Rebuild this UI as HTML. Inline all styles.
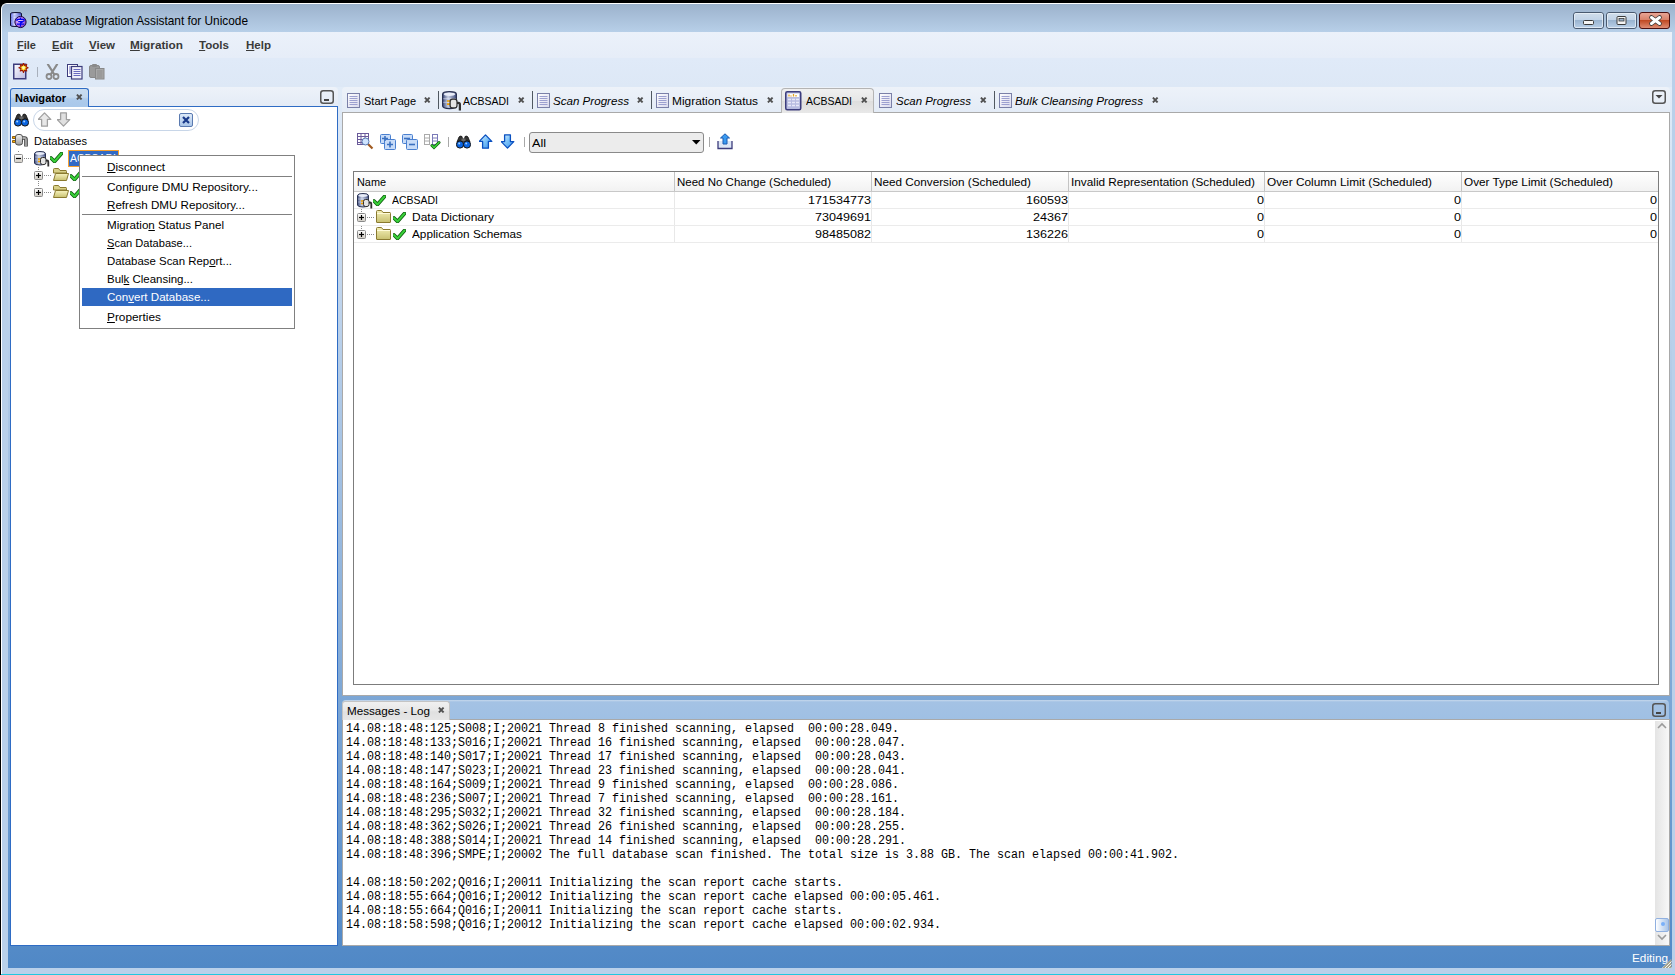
<!DOCTYPE html>
<html><head><meta charset="utf-8"><style>
*{margin:0;padding:0;box-sizing:border-box}
html,body{width:1675px;height:975px;overflow:hidden;background:#000;font-family:"Liberation Sans",sans-serif;font-size:11.5px;color:#000}
.a{position:absolute}
.t{position:absolute;white-space:nowrap;line-height:1}
u{text-decoration:underline;text-underline-offset:1px}
</style></head><body>
<div class="a" style="left:1px;top:3px;width:1674px;height:972px;background:#b9d0ea;border-top:1px solid #fff;border-left:1px solid #fff;border-radius:6px 0 0 0"></div>
<div class="a" style="left:2px;top:4px;width:1673px;height:28px;background:linear-gradient(#9cb2cc,#b7cfe8);border-radius:5px 0 0 0"></div>
<div class="a" style="left:8px;top:32px;width:1664px;height:936px;background:linear-gradient(#e9f0fa 0px,#e2ecf8 55px,#5088c6 936px)"></div>
<div class="a" style="left:8px;top:32px;width:1664px;height:26px;background:linear-gradient(#ebf1fa,#e6edf8)"></div>
<div class="a" style="left:8px;top:58px;width:1664px;height:29px;background:linear-gradient(#e0eaf8,#dde8f6)"></div>
<div class="a" style="left:1px;top:974px;width:1674px;height:1px;background:#1fc8e0"></div>
<svg class="a" style="left:10px;top:12px;" width="17" height="17" viewBox="0 0 17 17"><defs><linearGradient id="aig" x1="0" x2="1"><stop offset="0" stop-color="#4a58d8"/><stop offset=".35" stop-color="#d8dcff"/><stop offset="1" stop-color="#3a48c8"/></linearGradient>
<radialGradient id="aic" cx=".4" cy=".4" r=".7"><stop offset="0" stop-color="#f0d0ff"/><stop offset=".6" stop-color="#b070e8"/><stop offset="1" stop-color="#6020a0"/></radialGradient></defs>
<path d="M0.5 1.5 Q0.5 0.5 6 0.5 Q11.5 0.5 11.5 1.5 L11.5 13.5 Q11.5 14.5 6 14.5 Q0.5 14.5 0.5 13.5Z" fill="url(#aig)" stroke="#101030" stroke-width="1"/>
<path d="M1 4h10M1 7h10M1 10h10" stroke="#a0a8f0" stroke-width=".8"/>
<circle cx="10.5" cy="10" r="5.6" fill="url(#aic)" stroke="#1a0840" stroke-width="1"/>
<path d="M10.5 5.6v1.2 M7 9v-1.6h7v1.6 M8.2 9.6h4.6l-2.3 1.6v3.6 M6.8 12.2h7.4" fill="none" stroke="#0000f0" stroke-width="1.3"/></svg>
<div class="t" style="left:31.00px;top:14px;font-size:13px;font-weight:normal;font-style:normal;color:#000;font-family:'Liberation Sans',sans-serif;transform:scaleX(0.9099);transform-origin:0 0;">Database Migration Assistant for Unicode</div>
<svg class="a" style="left:1573px;top:12px;" width="98" height="18" viewBox="0 0 98 18"><defs>
<linearGradient id="wbg" x1="0" y1="0" x2="0" y2="1"><stop offset="0" stop-color="#d2deec"/><stop offset=".45" stop-color="#c2d4e8"/><stop offset=".5" stop-color="#9ab4d0"/><stop offset="1" stop-color="#bcd2ea"/></linearGradient>
<linearGradient id="wcg" x1="0" y1="0" x2="0" y2="1"><stop offset="0" stop-color="#eaa898"/><stop offset=".45" stop-color="#d8826a"/><stop offset=".5" stop-color="#c04a24"/><stop offset="1" stop-color="#e09078"/></linearGradient>
</defs>
<rect x="0.5" y="0.5" width="30" height="16" rx="2.5" fill="url(#wbg)" stroke="#4a5a70"/>
<rect x="1.5" y="1.5" width="28" height="14" rx="1.5" fill="none" stroke="#eef4fa" stroke-opacity=".7"/>
<rect x="10.5" y="8.5" width="10" height="4" rx="1" fill="#f4f4f4" stroke="#3a3a3a"/>
<rect x="33.5" y="0.5" width="30" height="16" rx="2.5" fill="url(#wbg)" stroke="#4a5a70"/>
<rect x="34.5" y="1.5" width="28" height="14" rx="1.5" fill="none" stroke="#eef4fa" stroke-opacity=".7"/>
<rect x="44" y="4.5" width="9" height="8" rx="1" fill="#f4f4f4" stroke="#3a3a3a"/>
<rect x="46" y="6.5" width="5" height="2.5" fill="#98b2ce" stroke="#3a3a3a" stroke-width=".8"/>
<rect x="66.5" y="0.5" width="30" height="16" rx="2.5" fill="url(#wcg)" stroke="#4a1010"/>
<path d="M78.5 5.5 L86.5 11.5 M86.5 5.5 L78.5 11.5" stroke="#3a3a3a" stroke-width="4.6" stroke-linecap="round"/>
<path d="M78.5 5.5 L86.5 11.5 M86.5 5.5 L78.5 11.5" stroke="#fff" stroke-width="3" stroke-linecap="round"/></svg>
<div class="t" style="left:17.00px;top:40px;font-size:11.5px;font-weight:bold;font-style:normal;color:#3a3a3a;font-family:'Liberation Sans',sans-serif;transform:scaleX(0.9578);transform-origin:0 0;"><u>F</u>ile</div>
<div class="t" style="left:52.00px;top:40px;font-size:11.5px;font-weight:bold;font-style:normal;color:#3a3a3a;font-family:'Liberation Sans',sans-serif;transform:scaleX(0.9662);transform-origin:0 0;"><u>E</u>dit</div>
<div class="t" style="left:89.00px;top:40px;font-size:11.5px;font-weight:bold;font-style:normal;color:#3a3a3a;font-family:'Liberation Sans',sans-serif;"><u>V</u>iew</div>
<div class="t" style="left:130.00px;top:40px;font-size:11.5px;font-weight:bold;font-style:normal;color:#3a3a3a;font-family:'Liberation Sans',sans-serif;transform:scaleX(1.0242);transform-origin:0 0;"><u>M</u>igration</div>
<div class="t" style="left:199.00px;top:40px;font-size:11.5px;font-weight:bold;font-style:normal;color:#3a3a3a;font-family:'Liberation Sans',sans-serif;transform:scaleX(1.0072);transform-origin:0 0;"><u>T</u>ools</div>
<div class="t" style="left:246.00px;top:40px;font-size:11.5px;font-weight:bold;font-style:normal;color:#3a3a3a;font-family:'Liberation Sans',sans-serif;transform:scaleX(1.0041);transform-origin:0 0;"><u>H</u>elp</div>
<svg class="a" style="left:13px;top:63px;" width="17" height="17" viewBox="0 0 17 17"><defs><linearGradient id="ng" x1="0" y1="0" x2="1" y2="1"><stop offset="0" stop-color="#fff"/><stop offset="1" stop-color="#b8b8e0"/></linearGradient></defs>
<rect x="0.75" y="1.25" width="12" height="14.5" fill="url(#ng)" stroke="#3c3c7c" stroke-width="1.5"/>
<polygon points="10.50,0.20 11.49,2.40 13.75,1.55 12.90,3.81 15.10,4.80 12.90,5.79 13.75,8.05 11.49,7.20 10.50,9.40 9.51,7.20 7.25,8.05 8.10,5.79 5.90,4.80 8.10,3.81 7.25,1.55 9.51,2.40" fill="#ffe830" stroke="#a01800" stroke-width="1.1" stroke-linejoin="round"/><circle cx="10.5" cy="4.8" r="1.3" fill="#fff8c0"/></svg><div class="a" style="left:37px;top:67px;width:1px;height:10px;background:#a8b0bc"></div><svg class="a" style="left:45px;top:64px;" width="15" height="16" viewBox="0 0 15 16"><path d="M3 0.5 L9 10 M12 0.5 L6 10" stroke="#8a8a8a" stroke-width="2.2" stroke-linecap="round"/>
<circle cx="4" cy="12.5" r="2.5" fill="none" stroke="#8a8a8a" stroke-width="1.8"/><circle cx="11" cy="12.5" r="2.5" fill="none" stroke="#8a8a8a" stroke-width="1.8"/></svg><svg class="a" style="left:67px;top:64px;" width="16" height="16" viewBox="0 0 16 16"><rect x="0.5" y="0.5" width="10" height="12" fill="#fff" stroke="#3c3c7c"/>
<path d="M2 3h6M2 5h6M2 7h6M2 9h6" stroke="#6a6ac0"/>
<rect x="4.5" y="2.5" width="10.5" height="12.5" fill="#f0f0fa" stroke="#3c3c7c" stroke-width="1.2"/>
<path d="M6.5 5.5h7M6.5 7.5h7M6.5 9.5h7M6.5 11.5h7" stroke="#6a6ac0"/></svg><svg class="a" style="left:89px;top:64px;" width="16" height="16" viewBox="0 0 16 16"><rect x="0.5" y="1.5" width="10" height="12" rx="1.5" fill="#9a9a9a" stroke="#888"/>
<rect x="3" y="0" width="5" height="3" rx="1" fill="#8a8a8a"/>
<rect x="6.5" y="4.5" width="8.5" height="10.5" fill="#a8a8a8" stroke="#888"/>
<path d="M8 7h5.5M8 9h5.5M8 11h5.5M8 13h5.5" stroke="#8c8c8c"/></svg>
<div class="a" style="left:10px;top:87px;width:328px;height:20px;background:linear-gradient(#edf2f9,#e3ebf6);border-radius:4px 4px 0 0"></div>
<div class="a" style="left:10px;top:88px;width:79px;height:19px;background:linear-gradient(#c9dcf0 0,#c3d8ee 45%,#aecbeb 55%,#a9c8ea 100%);border:1px solid #2f6cc4;border-bottom:none;border-radius:3px 3px 0 0"></div>
<div class="a" style="left:10px;top:106px;width:328px;height:840px;background:#fff;border:1px solid #2f6cc4"></div>
<div class="a" style="left:11px;top:106px;width:77px;height:1px;background:#a9c8ea"></div>
<div class="t" style="left:15.00px;top:93px;font-size:11.5px;font-weight:bold;font-style:normal;color:#000;font-family:'Liberation Sans',sans-serif;transform:scaleX(0.9620);transform-origin:0 0;">Navigator</div>
<svg class="a" style="left:76px;top:94px;" width="7" height="6" viewBox="0 0 7 6"><path d="M0.9 0.6 L5.6 5.4 M5.6 0.6 L0.9 5.4" stroke="#505050" stroke-width="1.9"/></svg>
<svg class="a" style="left:320px;top:90px;" width="14" height="14" viewBox="0 0 14 14"><rect x="0.75" y="0.75" width="12.5" height="12.5" rx="2.5" fill="none" stroke="#555" stroke-width="1.5"/><rect x="4" y="9" width="5" height="2" fill="#444"/></svg>
<div class="a" style="left:342px;top:87px;width:1328px;height:26px;background:linear-gradient(#edf2f9,#e3ebf6);border-radius:4px 4px 0 0"></div>
<div class="a" style="left:342px;top:112px;width:1328px;height:584px;background:#fff;border:1px solid #a9a9a9"></div>
<svg class="a" style="left:1652px;top:90px;" width="14" height="14" viewBox="0 0 14 14"><rect x="0.75" y="0.75" width="12.5" height="12.5" rx="2.5" fill="none" stroke="#555" stroke-width="1.5"/><path d="M3.5 5 L10.5 5 L7 8.5Z" fill="#444"/></svg>
<div class="a" style="left:342px;top:700px;width:1327px;height:20px;background:linear-gradient(#c6d8ec 0,#a4c2e4 2px,#9fc0e4 100%);border-radius:4px 4px 0 0"></div>
<div class="a" style="left:342px;top:719px;width:1328px;height:227px;background:#fff;border:1px solid #a9a9a9"></div>
<div class="a" style="left:342px;top:701px;width:108px;height:19px;background:linear-gradient(#f0f0f0,#e8e8e8 45%,#e0e0e0 55%,#e6e6e6);border-radius:3px 3px 0 0;border:1px solid #c4c4c4;border-bottom:none"></div>
<div class="t" style="left:347.00px;top:706px;font-size:11.5px;font-weight:normal;font-style:normal;color:#000;font-family:'Liberation Sans',sans-serif;transform:scaleX(1.0144);transform-origin:0 0;">Messages - Log</div>
<svg class="a" style="left:438px;top:707px;" width="7" height="6" viewBox="0 0 7 6"><path d="M0.9 0.6 L5.6 5.4 M5.6 0.6 L0.9 5.4" stroke="#505050" stroke-width="1.9"/></svg>
<svg class="a" style="left:1652px;top:703px;" width="14" height="14" viewBox="0 0 14 14"><rect x="0.75" y="0.75" width="12.5" height="12.5" rx="2.5" fill="none" stroke="#555" stroke-width="1.5"/><rect x="4" y="9" width="5" height="2" fill="#444"/></svg>
<svg class="a" style="left:14px;top:113px;" width="15" height="14" viewBox="0 0 15 14"><path d="M1 7 L3 2 Q4 0.5 6 1.5 L6.5 4 L8.5 4 L9 1.5 Q11 0.5 12 2 L14 7Z" fill="#333" stroke="#111" stroke-width=".8"/>
<rect x="5.5" y="3.5" width="4" height="3" fill="#666"/>
<circle cx="4" cy="9.5" r="3.6" fill="#0a64e0" stroke="#111" stroke-width="1"/>
<circle cx="11" cy="9.5" r="3.6" fill="#0a64e0" stroke="#111" stroke-width="1"/>
<circle cx="3.2" cy="8.6" r="1" fill="#a0d0ff"/><circle cx="10.2" cy="8.6" r="1" fill="#a0d0ff"/></svg>
<div class="a" style="left:33px;top:109px;width:166px;height:22px;border:1px solid #c8d6e8;border-radius:11px;background:#fff"></div>
<svg class="a" style="left:38px;top:112px;" width="14" height="15" viewBox="0 0 14 15"><path d="M6.5 0.9 L12.8 7.4 L9.4 7.4 L9.4 14.2 L3.6 14.2 L3.6 7.4 L0.2 7.4Z" fill="#e8e8e8" stroke="#a0a0a0" stroke-width="1.3" stroke-linejoin="round"/></svg>
<svg class="a" style="left:57px;top:112px;" width="14" height="15" viewBox="0 0 14 15"><path d="M6.5 14.1 L12.8 7.6 L9.4 7.6 L9.4 0.8 L3.6 0.8 L3.6 7.6 L0.2 7.6Z" fill="#e0e0e0" stroke="#a0a0a0" stroke-width="1.3" stroke-linejoin="round"/></svg>
<svg class="a" style="left:179px;top:113px;" width="15" height="15" viewBox="0 0 15 15"><defs><linearGradient id="xg" x1="0" y1="0" x2="0" y2="1"><stop offset="0" stop-color="#e0ecfa"/><stop offset="1" stop-color="#a8c4e8"/></linearGradient></defs>
<rect x="0.5" y="0.5" width="13" height="13" rx="1.5" fill="url(#xg)" stroke="#5a7ab0"/>
<path d="M4 4 L10 10 M10 4 L4 10" stroke="#1a3a8a" stroke-width="2.2"/></svg>
<svg class="a" style="left:12px;top:134px;" width="16" height="14" viewBox="0 0 16 14"><defs><linearGradient id="plg" x1="0" y1="0" x2="0" y2="1"><stop offset="0" stop-color="#f4f4f4"/><stop offset="1" stop-color="#9a9a9a"/></linearGradient></defs>
<path d="M0.5 2.5h3.5v2h-3.5z M0.5 6.5h3.5v2h-3.5z" fill="#f8b000" stroke="#704000" stroke-width=".8"/>
<rect x="3.5" y="0.5" width="7" height="10.5" rx="2.5" fill="url(#plg)" stroke="#505050"/>
<path d="M10.5 4 h2 q1.5 0 1.5 1.5 v7" fill="none" stroke="#404040" stroke-width="3.6"/>
<path d="M10.5 4 h2 q1.5 0 1.5 1.5 v7" fill="none" stroke="#a8a8a8" stroke-width="1.8"/></svg>
<div class="t" style="left:34.00px;top:136px;font-size:11.5px;font-weight:normal;font-style:normal;color:#000;font-family:'Liberation Sans',sans-serif;transform:scaleX(0.9642);transform-origin:0 0;">Databases</div>
<svg class="a" style="left:14px;top:154px;" width="9" height="9" viewBox="0 0 9 9"><defs><linearGradient id="tbg" x1="0" y1="0" x2="0" y2="1"><stop offset="0" stop-color="#fff"/><stop offset="1" stop-color="#d0ccc4"/></linearGradient></defs><rect x="0.5" y="0.5" width="8" height="8" rx="1" fill="url(#tbg)" stroke="#8a8a8a"/><path d="M2 4.5h5" stroke="#000" stroke-width="1.2"/></svg>
<div class="a" style="left:24px;top:158px;width:7px;height:1px;background:repeating-linear-gradient(90deg,#8a8a8a 0 1px,transparent 1px 2px)"></div>
<div class="a" style="left:18px;top:151px;width:1px;height:2px;background:repeating-linear-gradient(180deg,#8a8a8a 0 1px,transparent 1px 2px)"></div>
<svg class="a" style="left:34px;top:151px;" width="16" height="16" viewBox="0 0 16 16"><defs><linearGradient id="dbg" x1="0" x2="1"><stop offset="0" stop-color="#3e4c7c"/><stop offset=".4" stop-color="#c8d0e4"/><stop offset="1" stop-color="#404e80"/></linearGradient></defs>
<path d="M0.5 2.5 Q0.5 0.5 6 0.5 Q11.5 0.5 11.5 2.5 L11.5 12 Q11.5 14 6 14 Q0.5 14 0.5 12Z" fill="url(#dbg)" stroke="#283050"/>
<ellipse cx="6" cy="2.6" rx="4.6" ry="1.3" fill="#e8ecf8"/>
<path d="M1 6h10M1 9h10" stroke="#e8ecf8" stroke-opacity=".45"/>
<path d="M4 8h3M4 10.5h3" stroke="#f0a000" stroke-width="1.3"/>
<rect x="6.5" y="6.5" width="5.5" height="7" rx="2" fill="#e4e4e4" stroke="#303030"/>
<path d="M12 9.5 h1 q1.3 0 1.3 1.3 v4.7" fill="none" stroke="#303030" stroke-width="1.8"/></svg>
<svg class="a" style="left:50px;top:152px;" width="13" height="11" viewBox="0 0 13 11"><path d="M1 6 L4.5 9.5 L11.5 1.5" fill="none" stroke="#0a5a0a" stroke-width="3.6" stroke-linecap="round" stroke-linejoin="round"/>
<path d="M1 6 L4.5 9.5 L11.5 1.5" fill="none" stroke="#3ad03a" stroke-width="2" stroke-linecap="round" stroke-linejoin="round"/></svg>
<div class="a" style="left:68px;top:150px;width:51px;height:17px;background:#316ac5;border:1px solid #f5a030"></div>
<div class="t" style="left:70.00px;top:153px;font-size:11.5px;font-weight:normal;font-style:normal;color:#fff;font-family:'Liberation Sans',sans-serif;transform:scaleX(0.9112);transform-origin:0 0;">ACBSADI</div>
<svg class="a" style="left:34px;top:171px;" width="9" height="9" viewBox="0 0 9 9"><defs><linearGradient id="tbg" x1="0" y1="0" x2="0" y2="1"><stop offset="0" stop-color="#fff"/><stop offset="1" stop-color="#d0ccc4"/></linearGradient></defs><rect x="0.5" y="0.5" width="8" height="8" rx="1" fill="url(#tbg)" stroke="#8a8a8a"/><path d="M2 4.5h5" stroke="#000" stroke-width="1.2"/><path d="M4.5 2v5" stroke="#000" stroke-width="1.2"/></svg>
<div class="a" style="left:44px;top:175px;width:7px;height:1px;background:repeating-linear-gradient(90deg,#8a8a8a 0 1px,transparent 1px 2px)"></div>
<svg class="a" style="left:53px;top:168px;" width="16" height="14" viewBox="0 0 16 14"><defs><linearGradient id="fgo" x1="0" y1="0" x2="0" y2="1"><stop offset="0" stop-color="#f8f4c0"/><stop offset="1" stop-color="#c8c070"/></linearGradient></defs>
<path d="M0.5 1.5 Q0.5 0.5 1.5 0.5 L5.5 0.5 L7 2.5 L13 2.5 Q13.5 2.5 13.5 3.5 L13.5 5 L0.5 5Z" fill="#d8d088" stroke="#8a7a30"/>
<path d="M0.5 12.5 L2.5 5.5 L15.5 5.5 L13.5 12.5Z" fill="url(#fgo)" stroke="#8a7a30" stroke-linejoin="round"/></svg>
<svg class="a" style="left:70px;top:170px;" width="13" height="11" viewBox="0 0 13 11"><path d="M1 6 L4.5 9.5 L11.5 1.5" fill="none" stroke="#0a5a0a" stroke-width="3.6" stroke-linecap="round" stroke-linejoin="round"/>
<path d="M1 6 L4.5 9.5 L11.5 1.5" fill="none" stroke="#3ad03a" stroke-width="2" stroke-linecap="round" stroke-linejoin="round"/></svg>
<svg class="a" style="left:34px;top:188px;" width="9" height="9" viewBox="0 0 9 9"><defs><linearGradient id="tbg" x1="0" y1="0" x2="0" y2="1"><stop offset="0" stop-color="#fff"/><stop offset="1" stop-color="#d0ccc4"/></linearGradient></defs><rect x="0.5" y="0.5" width="8" height="8" rx="1" fill="url(#tbg)" stroke="#8a8a8a"/><path d="M2 4.5h5" stroke="#000" stroke-width="1.2"/><path d="M4.5 2v5" stroke="#000" stroke-width="1.2"/></svg>
<div class="a" style="left:44px;top:192px;width:7px;height:1px;background:repeating-linear-gradient(90deg,#8a8a8a 0 1px,transparent 1px 2px)"></div>
<svg class="a" style="left:53px;top:185px;" width="16" height="14" viewBox="0 0 16 14"><defs><linearGradient id="fgo" x1="0" y1="0" x2="0" y2="1"><stop offset="0" stop-color="#f8f4c0"/><stop offset="1" stop-color="#c8c070"/></linearGradient></defs>
<path d="M0.5 1.5 Q0.5 0.5 1.5 0.5 L5.5 0.5 L7 2.5 L13 2.5 Q13.5 2.5 13.5 3.5 L13.5 5 L0.5 5Z" fill="#d8d088" stroke="#8a7a30"/>
<path d="M0.5 12.5 L2.5 5.5 L15.5 5.5 L13.5 12.5Z" fill="url(#fgo)" stroke="#8a7a30" stroke-linejoin="round"/></svg>
<svg class="a" style="left:70px;top:187px;" width="13" height="11" viewBox="0 0 13 11"><path d="M1 6 L4.5 9.5 L11.5 1.5" fill="none" stroke="#0a5a0a" stroke-width="3.6" stroke-linecap="round" stroke-linejoin="round"/>
<path d="M1 6 L4.5 9.5 L11.5 1.5" fill="none" stroke="#3ad03a" stroke-width="2" stroke-linecap="round" stroke-linejoin="round"/></svg>
<div class="a" style="left:38px;top:167px;width:1px;height:4px;background:repeating-linear-gradient(180deg,#8a8a8a 0 1px,transparent 1px 2px)"></div>
<div class="a" style="left:38px;top:181px;width:1px;height:6px;background:repeating-linear-gradient(180deg,#8a8a8a 0 1px,transparent 1px 2px)"></div>
<div class="a" style="left:79px;top:155px;width:216px;height:174px;background:#fff;border:1px solid #808080"></div>
<div class="a" style="left:82px;top:176px;width:210px;height:1px;background:#808080"></div>
<div class="a" style="left:82px;top:214px;width:210px;height:1px;background:#808080"></div>
<div class="a" style="left:82px;top:288px;width:210px;height:18px;background:#2f69c2"></div>
<div class="t" style="left:107.00px;top:162px;font-size:11.5px;font-weight:normal;font-style:normal;color:#000;font-family:'Liberation Sans',sans-serif;transform:scaleX(1.0199);transform-origin:0 0;"><u>D</u>isconnect</div>
<div class="t" style="left:107.00px;top:182px;font-size:11.5px;font-weight:normal;font-style:normal;color:#000;font-family:'Liberation Sans',sans-serif;transform:scaleX(1.0331);transform-origin:0 0;">Con<u>f</u>igure DMU Repository...</div>
<div class="t" style="left:107.00px;top:200px;font-size:11.5px;font-weight:normal;font-style:normal;color:#000;font-family:'Liberation Sans',sans-serif;transform:scaleX(1.0105);transform-origin:0 0;"><u>R</u>efresh DMU Repository...</div>
<div class="t" style="left:107.00px;top:220px;font-size:11.5px;font-weight:normal;font-style:normal;color:#000;font-family:'Liberation Sans',sans-serif;transform:scaleX(1.0113);transform-origin:0 0;">Migratio<u>n</u> Status Panel</div>
<div class="t" style="left:107.00px;top:238px;font-size:11.5px;font-weight:normal;font-style:normal;color:#000;font-family:'Liberation Sans',sans-serif;transform:scaleX(0.9637);transform-origin:0 0;"><u>S</u>can Database...</div>
<div class="t" style="left:107.00px;top:256px;font-size:11.5px;font-weight:normal;font-style:normal;color:#000;font-family:'Liberation Sans',sans-serif;transform:scaleX(0.9927);transform-origin:0 0;">Database Scan Rep<u>o</u>rt...</div>
<div class="t" style="left:107.00px;top:274px;font-size:11.5px;font-weight:normal;font-style:normal;color:#000;font-family:'Liberation Sans',sans-serif;transform:scaleX(0.9964);transform-origin:0 0;">Bul<u>k</u> Cleansing...</div>
<div class="t" style="left:107.00px;top:292px;font-size:11.5px;font-weight:normal;font-style:normal;color:#fff;font-family:'Liberation Sans',sans-serif;transform:scaleX(1.0069);transform-origin:0 0;">Con<u>v</u>ert Database...</div>
<div class="t" style="left:107.00px;top:312px;font-size:11.5px;font-weight:normal;font-style:normal;color:#000;font-family:'Liberation Sans',sans-serif;transform:scaleX(1.0297);transform-origin:0 0;"><u>P</u>roperties</div>
<div class="a" style="left:781px;top:88px;width:93px;height:25px;background:linear-gradient(#f0f0f0,#e6e6e6 50%,#dedede 52%,#e8e8e8);border:1px solid #b4b4b4;border-bottom:none;border-radius:4px 4px 0 0"></div>
<div class="a" style="left:438px;top:91px;width:1px;height:18px;background:#505860"></div>
<div class="a" style="left:532px;top:91px;width:1px;height:18px;background:#505860"></div>
<div class="a" style="left:651px;top:91px;width:1px;height:18px;background:#505860"></div>
<div class="a" style="left:994px;top:91px;width:1px;height:18px;background:#505860"></div>
<svg class="a" style="left:347px;top:93px;" width="14" height="16" viewBox="0 0 14 16"><defs><linearGradient id="pg" x1="0" y1="0" x2="1" y2="1"><stop offset="0" stop-color="#fff"/><stop offset="1" stop-color="#d8d8ec"/></linearGradient></defs>
<rect x="0.5" y="0.5" width="12" height="14" fill="url(#pg)" stroke="#7a80a8"/>
<path d="M2.5 3.5h8M2.5 5.5h8M2.5 7.5h8M2.5 9.5h8M2.5 11.5h8" stroke="#9ca0d0" stroke-width="1"/></svg>
<div class="t" style="left:364.00px;top:96px;font-size:11.5px;font-weight:normal;font-style:normal;color:#000;font-family:'Liberation Sans',sans-serif;transform:scaleX(0.9570);transform-origin:0 0;">Start Page</div>
<svg class="a" style="left:424px;top:97px;" width="7" height="6" viewBox="0 0 7 6"><path d="M0.9 0.6 L5.6 5.4 M5.6 0.6 L0.9 5.4" stroke="#505050" stroke-width="1.9"/></svg>
<svg class="a" style="left:442px;top:91px;" width="20" height="20" viewBox="0 0 16 16"><defs><linearGradient id="dbg2" x1="0" x2="1"><stop offset="0" stop-color="#3e4c7c"/><stop offset=".4" stop-color="#c8d0e4"/><stop offset="1" stop-color="#404e80"/></linearGradient></defs>
<path d="M0.5 2.5 Q0.5 0.5 6 0.5 Q11.5 0.5 11.5 2.5 L11.5 12 Q11.5 14 6 14 Q0.5 14 0.5 12Z" fill="url(#dbg2)" stroke="#283050"/>
<ellipse cx="6" cy="2.6" rx="4.6" ry="1.3" fill="#e8ecf8"/>
<path d="M1 6h10M1 9h10" stroke="#e8ecf8" stroke-opacity=".45"/>
<path d="M4 8h3M4 10.5h3" stroke="#f0a000" stroke-width="1.3"/>
<rect x="6.5" y="6.5" width="5.5" height="7" rx="2" fill="#e4e4e4" stroke="#303030"/>
<path d="M12 9.5 h1 q1.3 0 1.3 1.3 v4.7" fill="none" stroke="#303030" stroke-width="1.8"/></svg>
<div class="t" style="left:463.00px;top:96px;font-size:11.5px;font-weight:normal;font-style:normal;color:#000;font-family:'Liberation Sans',sans-serif;transform:scaleX(0.9112);transform-origin:0 0;">ACBSADI</div>
<svg class="a" style="left:518px;top:97px;" width="7" height="6" viewBox="0 0 7 6"><path d="M0.9 0.6 L5.6 5.4 M5.6 0.6 L0.9 5.4" stroke="#505050" stroke-width="1.9"/></svg>
<svg class="a" style="left:537px;top:93px;" width="14" height="16" viewBox="0 0 14 16"><defs><linearGradient id="pg" x1="0" y1="0" x2="1" y2="1"><stop offset="0" stop-color="#fff"/><stop offset="1" stop-color="#d8d8ec"/></linearGradient></defs>
<rect x="0.5" y="0.5" width="12" height="14" fill="url(#pg)" stroke="#7a80a8"/>
<path d="M2.5 3.5h8M2.5 5.5h8M2.5 7.5h8M2.5 9.5h8M2.5 11.5h8" stroke="#9ca0d0" stroke-width="1"/></svg>
<div class="t" style="left:553.00px;top:96px;font-size:11.5px;font-weight:normal;font-style:italic;color:#000;font-family:'Liberation Sans',sans-serif;transform:scaleX(1.0074);transform-origin:0 0;">Scan Progress</div>
<svg class="a" style="left:637px;top:97px;" width="7" height="6" viewBox="0 0 7 6"><path d="M0.9 0.6 L5.6 5.4 M5.6 0.6 L0.9 5.4" stroke="#505050" stroke-width="1.9"/></svg>
<svg class="a" style="left:656px;top:93px;" width="14" height="16" viewBox="0 0 14 16"><defs><linearGradient id="pg" x1="0" y1="0" x2="1" y2="1"><stop offset="0" stop-color="#fff"/><stop offset="1" stop-color="#d8d8ec"/></linearGradient></defs>
<rect x="0.5" y="0.5" width="12" height="14" fill="url(#pg)" stroke="#7a80a8"/>
<path d="M2.5 3.5h8M2.5 5.5h8M2.5 7.5h8M2.5 9.5h8M2.5 11.5h8" stroke="#9ca0d0" stroke-width="1"/></svg>
<div class="t" style="left:672.00px;top:96px;font-size:11.5px;font-weight:normal;font-style:normal;color:#000;font-family:'Liberation Sans',sans-serif;transform:scaleX(1.0351);transform-origin:0 0;">Migration Status</div>
<svg class="a" style="left:767px;top:97px;" width="7" height="6" viewBox="0 0 7 6"><path d="M0.9 0.6 L5.6 5.4 M5.6 0.6 L0.9 5.4" stroke="#505050" stroke-width="1.9"/></svg>
<svg class="a" style="left:785px;top:91px;" width="17" height="20" viewBox="0 0 17 20"><rect x="0.75" y="0.75" width="15" height="18" rx="1.5" fill="#b8bce0" stroke="#3c3c7c" stroke-width="1.5"/>
<rect x="2.5" y="2.5" width="11.5" height="3.5" fill="#fff"/><path d="M4 5.5v-2M6 5.5v-1M8.5 5.5v-2.5M11 5.5v-1.5" stroke="#e0a020" stroke-width="1.3"/>
<path d="M3 8.5h3M7 8.5h3M11 8.5h3M3 11.5h3M7 11.5h3M11 11.5h3M3 14.5h3M7 14.5h3M11 14.5h3" stroke="#e8e8f8" stroke-width="1.5"/></svg>
<div class="t" style="left:806.00px;top:96px;font-size:11.5px;font-weight:normal;font-style:normal;color:#000;font-family:'Liberation Sans',sans-serif;transform:scaleX(0.9112);transform-origin:0 0;">ACBSADI</div>
<svg class="a" style="left:861px;top:97px;" width="7" height="6" viewBox="0 0 7 6"><path d="M0.9 0.6 L5.6 5.4 M5.6 0.6 L0.9 5.4" stroke="#505050" stroke-width="1.9"/></svg>
<svg class="a" style="left:879px;top:93px;" width="14" height="16" viewBox="0 0 14 16"><defs><linearGradient id="pg" x1="0" y1="0" x2="1" y2="1"><stop offset="0" stop-color="#fff"/><stop offset="1" stop-color="#d8d8ec"/></linearGradient></defs>
<rect x="0.5" y="0.5" width="12" height="14" fill="url(#pg)" stroke="#7a80a8"/>
<path d="M2.5 3.5h8M2.5 5.5h8M2.5 7.5h8M2.5 9.5h8M2.5 11.5h8" stroke="#9ca0d0" stroke-width="1"/></svg>
<div class="t" style="left:896.00px;top:96px;font-size:11.5px;font-weight:normal;font-style:italic;color:#000;font-family:'Liberation Sans',sans-serif;transform:scaleX(0.9942);transform-origin:0 0;">Scan Progress</div>
<svg class="a" style="left:980px;top:97px;" width="7" height="6" viewBox="0 0 7 6"><path d="M0.9 0.6 L5.6 5.4 M5.6 0.6 L0.9 5.4" stroke="#505050" stroke-width="1.9"/></svg>
<svg class="a" style="left:999px;top:93px;" width="14" height="16" viewBox="0 0 14 16"><defs><linearGradient id="pg" x1="0" y1="0" x2="1" y2="1"><stop offset="0" stop-color="#fff"/><stop offset="1" stop-color="#d8d8ec"/></linearGradient></defs>
<rect x="0.5" y="0.5" width="12" height="14" fill="url(#pg)" stroke="#7a80a8"/>
<path d="M2.5 3.5h8M2.5 5.5h8M2.5 7.5h8M2.5 9.5h8M2.5 11.5h8" stroke="#9ca0d0" stroke-width="1"/></svg>
<div class="t" style="left:1015.00px;top:96px;font-size:11.5px;font-weight:normal;font-style:italic;color:#000;font-family:'Liberation Sans',sans-serif;transform:scaleX(1.0165);transform-origin:0 0;">Bulk Cleansing Progress</div>
<svg class="a" style="left:1152px;top:97px;" width="7" height="6" viewBox="0 0 7 6"><path d="M0.9 0.6 L5.6 5.4 M5.6 0.6 L0.9 5.4" stroke="#505050" stroke-width="1.9"/></svg>
<svg class="a" style="left:357px;top:133px;" width="17" height="17" viewBox="0 0 17 17"><rect x="0.5" y="0.5" width="11" height="11" fill="#fff" stroke="#6a5a9a"/><path d="M0.5 3.5h11M0.5 6.5h11M0.5 9.5h11M4 0.5v11M8 0.5v11" stroke="#6a5a9a"/>
<path d="M10 10 L15.5 15.5" stroke="#a05a20" stroke-width="2.2"/><circle cx="8.5" cy="8.5" r="3.5" fill="#cfe4ff" stroke="#5a7ab0"/></svg>
<svg class="a" style="left:380px;top:134px;" width="16" height="16" viewBox="0 0 16 16"><rect x="0.5" y="0.5" width="10" height="9" rx="1" fill="#c8dcf8" stroke="#4a80d0"/><rect x="4.5" y="5.5" width="11" height="10" rx="1" fill="#c8dcf8" stroke="#4a80d0"/><path d="M2 4.5h6M5 2v5" stroke="#3a70c0" stroke-width="1.6"/><path d="M7 10.5h6M10 7.5v6" stroke="#3a70c0" stroke-width="1.6"/></svg>
<svg class="a" style="left:402px;top:134px;" width="16" height="16" viewBox="0 0 16 16"><rect x="0.5" y="0.5" width="10" height="9" rx="1" fill="#c8dcf8" stroke="#4a80d0"/><rect x="4.5" y="5.5" width="11" height="10" rx="1" fill="#c8dcf8" stroke="#4a80d0"/><path d="M2 4.5h6" stroke="#3a70c0" stroke-width="1.6"/><path d="M7 10.5h6" stroke="#3a70c0" stroke-width="1.6"/></svg>
<svg class="a" style="left:424px;top:134px;" width="17" height="16" viewBox="0 0 17 16"><rect x="0.5" y="0.5" width="5" height="10" fill="#fff" stroke="#aaa"/><path d="M0.5 4h5M0.5 7h5" stroke="#aaa"/>
<rect x="8.5" y="0.5" width="5" height="10" fill="#fff" stroke="#7a7ab8"/><path d="M8.5 4h5M8.5 7h5" stroke="#7a7ab8"/>
<path d="M8 11.5 L10 13.5 L15 8.5" fill="none" stroke="#0a5a0a" stroke-width="3" stroke-linecap="round"/><path d="M8 11.5 L10 13.5 L15 8.5" fill="none" stroke="#3ad03a" stroke-width="1.6" stroke-linecap="round"/></svg>
<div class="a" style="left:448px;top:137px;width:1px;height:10px;background:#a8a8a8"></div>
<svg class="a" style="left:456px;top:135px;" width="15" height="14" viewBox="0 0 15 14"><path d="M1 7 L3 2 Q4 0.5 6 1.5 L6.5 4 L8.5 4 L9 1.5 Q11 0.5 12 2 L14 7Z" fill="#333" stroke="#111" stroke-width=".8"/>
<rect x="5.5" y="3.5" width="4" height="3" fill="#666"/>
<circle cx="4" cy="9.5" r="3.6" fill="#0a64e0" stroke="#111" stroke-width="1"/>
<circle cx="11" cy="9.5" r="3.6" fill="#0a64e0" stroke="#111" stroke-width="1"/>
<circle cx="3.2" cy="8.6" r="1" fill="#a0d0ff"/><circle cx="10.2" cy="8.6" r="1" fill="#a0d0ff"/></svg>
<svg class="a" style="left:479px;top:134px;" width="14" height="15" viewBox="0 0 14 15"><defs><linearGradient id="ag3" x1="0" y1="0" x2="1" y2="1"><stop offset="0" stop-color="#e0f4ff"/><stop offset=".5" stop-color="#78c0f8"/><stop offset="1" stop-color="#3a90e8"/></linearGradient></defs><path d="M6.5 0.9 L12.8 7.4 L9.4 7.4 L9.4 14.2 L3.6 14.2 L3.6 7.4 L0.2 7.4Z" fill="url(#ag3)" stroke="#0a50c0" stroke-width="1.3" stroke-linejoin="round"/></svg>
<svg class="a" style="left:501px;top:134px;" width="14" height="15" viewBox="0 0 14 15"><defs><linearGradient id="ag4" x1="0" y1="0" x2="1" y2="1"><stop offset="0" stop-color="#e0f4ff"/><stop offset=".5" stop-color="#78c0f8"/><stop offset="1" stop-color="#3a90e8"/></linearGradient></defs><path d="M6.5 14.1 L12.8 7.6 L9.4 7.6 L9.4 0.8 L3.6 0.8 L3.6 7.6 L0.2 7.6Z" fill="url(#ag4)" stroke="#0a50c0" stroke-width="1.3" stroke-linejoin="round"/></svg>
<div class="a" style="left:524px;top:137px;width:1px;height:10px;background:#a8a8a8"></div>
<div class="a" style="left:529px;top:132px;width:175px;height:21px;background:#ececec;border:1px solid #8a8a8a;border-radius:3px"></div>
<div class="t" style="left:532.00px;top:138px;font-size:11.5px;font-weight:normal;font-style:normal;color:#000;font-family:'Liberation Sans',sans-serif;transform:scaleX(1.0967);transform-origin:0 0;">All</div>
<svg class="a" style="left:692px;top:140px;" width="9" height="5" viewBox="0 0 9 5"><path d="M0 0h8.5L4.25 4.5z" fill="#000"/></svg>
<div class="a" style="left:709px;top:137px;width:1px;height:10px;background:#a8a8a8"></div>
<svg class="a" style="left:717px;top:133px;" width="16" height="17" viewBox="0 0 16 17"><path d="M1 8 v7.5 h14 v-7.5" fill="#dde6f5" stroke="#3c3c7c" stroke-width="1.3"/>
<path d="M8 0.8 L12.5 5 L10 5 L10 11 L6 11 L6 5 L3.5 5Z" fill="#3a9af0" stroke="#1a5ab0" stroke-linejoin="round"/></svg>
<div class="a" style="left:353px;top:171px;width:1306px;height:514px;background:#fff;border:1px solid #7c7c7c"></div>
<div class="a" style="left:354px;top:172px;width:1304px;height:19px;background:linear-gradient(#ffffff,#f2f2f2)"></div>
<div class="a" style="left:354px;top:191px;width:1304px;height:1px;background:#c8c8c8"></div>
<div class="a" style="left:674px;top:172px;width:1px;height:19px;background:#c4c4c4"></div>
<div class="a" style="left:674px;top:192px;width:1px;height:51px;background:#e8e8e8"></div>
<div class="a" style="left:871px;top:172px;width:1px;height:19px;background:#c4c4c4"></div>
<div class="a" style="left:871px;top:192px;width:1px;height:51px;background:#e8e8e8"></div>
<div class="a" style="left:1068px;top:172px;width:1px;height:19px;background:#c4c4c4"></div>
<div class="a" style="left:1068px;top:192px;width:1px;height:51px;background:#e8e8e8"></div>
<div class="a" style="left:1264px;top:172px;width:1px;height:19px;background:#c4c4c4"></div>
<div class="a" style="left:1264px;top:192px;width:1px;height:51px;background:#e8e8e8"></div>
<div class="a" style="left:1461px;top:172px;width:1px;height:19px;background:#c4c4c4"></div>
<div class="a" style="left:1461px;top:192px;width:1px;height:51px;background:#e8e8e8"></div>
<div class="a" style="left:354px;top:208px;width:1304px;height:1px;background:#ebebeb"></div>
<div class="a" style="left:354px;top:225px;width:1304px;height:1px;background:#ebebeb"></div>
<div class="a" style="left:354px;top:242px;width:1304px;height:1px;background:#ebebeb"></div>
<div class="t" style="left:357.00px;top:177px;font-size:11.5px;font-weight:normal;font-style:normal;color:#000;font-family:'Liberation Sans',sans-serif;transform:scaleX(0.9445);transform-origin:0 0;">Name</div>
<div class="t" style="left:677.00px;top:177px;font-size:11.5px;font-weight:normal;font-style:normal;color:#000;font-family:'Liberation Sans',sans-serif;">Need No Change (Scheduled)</div>
<div class="t" style="left:874.00px;top:177px;font-size:11.5px;font-weight:normal;font-style:normal;color:#000;font-family:'Liberation Sans',sans-serif;transform:scaleX(1.0192);transform-origin:0 0;">Need Conversion (Scheduled)</div>
<div class="t" style="left:1071.00px;top:177px;font-size:11.5px;font-weight:normal;font-style:normal;color:#000;font-family:'Liberation Sans',sans-serif;transform:scaleX(1.0243);transform-origin:0 0;">Invalid Representation (Scheduled)</div>
<div class="t" style="left:1267.00px;top:177px;font-size:11.5px;font-weight:normal;font-style:normal;color:#000;font-family:'Liberation Sans',sans-serif;transform:scaleX(1.0285);transform-origin:0 0;">Over Column Limit (Scheduled)</div>
<div class="t" style="left:1464.00px;top:177px;font-size:11.5px;font-weight:normal;font-style:normal;color:#000;font-family:'Liberation Sans',sans-serif;transform:scaleX(1.0238);transform-origin:0 0;">Over Type Limit (Scheduled)</div>
<div class="t" style="left:808px;top:195px;font-size:11.5px;transform:scaleX(1.0944);transform-origin:0 0">171534773</div>
<div class="t" style="left:1026px;top:195px;font-size:11.5px;transform:scaleX(1.0944);transform-origin:0 0">160593</div>
<div class="t" style="left:1257px;top:195px;font-size:11.5px;transform:scaleX(1.0944);transform-origin:0 0">0</div>
<div class="t" style="left:1454px;top:195px;font-size:11.5px;transform:scaleX(1.0944);transform-origin:0 0">0</div>
<div class="t" style="left:1650px;top:195px;font-size:11.5px;transform:scaleX(1.0944);transform-origin:0 0">0</div>
<div class="t" style="left:815px;top:212px;font-size:11.5px;transform:scaleX(1.0944);transform-origin:0 0">73049691</div>
<div class="t" style="left:1033px;top:212px;font-size:11.5px;transform:scaleX(1.0944);transform-origin:0 0">24367</div>
<div class="t" style="left:1257px;top:212px;font-size:11.5px;transform:scaleX(1.0944);transform-origin:0 0">0</div>
<div class="t" style="left:1454px;top:212px;font-size:11.5px;transform:scaleX(1.0944);transform-origin:0 0">0</div>
<div class="t" style="left:1650px;top:212px;font-size:11.5px;transform:scaleX(1.0944);transform-origin:0 0">0</div>
<div class="t" style="left:815px;top:229px;font-size:11.5px;transform:scaleX(1.0944);transform-origin:0 0">98485082</div>
<div class="t" style="left:1026px;top:229px;font-size:11.5px;transform:scaleX(1.0944);transform-origin:0 0">136226</div>
<div class="t" style="left:1257px;top:229px;font-size:11.5px;transform:scaleX(1.0944);transform-origin:0 0">0</div>
<div class="t" style="left:1454px;top:229px;font-size:11.5px;transform:scaleX(1.0944);transform-origin:0 0">0</div>
<div class="t" style="left:1650px;top:229px;font-size:11.5px;transform:scaleX(1.0944);transform-origin:0 0">0</div>
<svg class="a" style="left:357px;top:193px;" width="16" height="16" viewBox="0 0 16 16"><defs><linearGradient id="dbg" x1="0" x2="1"><stop offset="0" stop-color="#3e4c7c"/><stop offset=".4" stop-color="#c8d0e4"/><stop offset="1" stop-color="#404e80"/></linearGradient></defs>
<path d="M0.5 2.5 Q0.5 0.5 6 0.5 Q11.5 0.5 11.5 2.5 L11.5 12 Q11.5 14 6 14 Q0.5 14 0.5 12Z" fill="url(#dbg)" stroke="#283050"/>
<ellipse cx="6" cy="2.6" rx="4.6" ry="1.3" fill="#e8ecf8"/>
<path d="M1 6h10M1 9h10" stroke="#e8ecf8" stroke-opacity=".45"/>
<path d="M4 8h3M4 10.5h3" stroke="#f0a000" stroke-width="1.3"/>
<rect x="6.5" y="6.5" width="5.5" height="7" rx="2" fill="#e4e4e4" stroke="#303030"/>
<path d="M12 9.5 h1 q1.3 0 1.3 1.3 v4.7" fill="none" stroke="#303030" stroke-width="1.8"/></svg>
<svg class="a" style="left:373px;top:195px;" width="13" height="11" viewBox="0 0 13 11"><path d="M1 6 L4.5 9.5 L11.5 1.5" fill="none" stroke="#0a5a0a" stroke-width="3.6" stroke-linecap="round" stroke-linejoin="round"/>
<path d="M1 6 L4.5 9.5 L11.5 1.5" fill="none" stroke="#3ad03a" stroke-width="2" stroke-linecap="round" stroke-linejoin="round"/></svg>
<div class="t" style="left:392.00px;top:195px;font-size:11.5px;font-weight:normal;font-style:normal;color:#000;font-family:'Liberation Sans',sans-serif;transform:scaleX(0.9112);transform-origin:0 0;">ACBSADI</div>
<svg class="a" style="left:357px;top:213px;" width="9" height="9" viewBox="0 0 9 9"><defs><linearGradient id="tbg" x1="0" y1="0" x2="0" y2="1"><stop offset="0" stop-color="#fff"/><stop offset="1" stop-color="#d0ccc4"/></linearGradient></defs><rect x="0.5" y="0.5" width="8" height="8" rx="1" fill="url(#tbg)" stroke="#8a8a8a"/><path d="M2 4.5h5" stroke="#000" stroke-width="1.2"/><path d="M4.5 2v5" stroke="#000" stroke-width="1.2"/></svg>
<div class="a" style="left:367px;top:217px;width:8px;height:1px;background:repeating-linear-gradient(90deg,#8a8a8a 0 1px,transparent 1px 2px)"></div>
<svg class="a" style="left:376px;top:210px;" width="16" height="14" viewBox="0 0 16 14"><defs><linearGradient id="fg" x1="0" y1="0" x2="0" y2="1"><stop offset="0" stop-color="#f4f0b8"/><stop offset="1" stop-color="#c8c070"/></linearGradient></defs>
<path d="M0.5 1.5 Q0.5 0.5 1.5 0.5 L5.5 0.5 L7 2.5 L14 2.5 Q14.5 2.5 14.5 3.5 L14.5 12 Q14.5 12.5 14 12.5 L1 12.5 Q0.5 12.5 0.5 12Z" fill="url(#fg)" stroke="#8a7a30"/>
<path d="M1 3.5 h13" stroke="#fffbd8" stroke-width="1"/></svg>
<svg class="a" style="left:393px;top:212px;" width="13" height="11" viewBox="0 0 13 11"><path d="M1 6 L4.5 9.5 L11.5 1.5" fill="none" stroke="#0a5a0a" stroke-width="3.6" stroke-linecap="round" stroke-linejoin="round"/>
<path d="M1 6 L4.5 9.5 L11.5 1.5" fill="none" stroke="#3ad03a" stroke-width="2" stroke-linecap="round" stroke-linejoin="round"/></svg>
<div class="t" style="left:412.00px;top:212px;font-size:11.5px;font-weight:normal;font-style:normal;color:#000;font-family:'Liberation Sans',sans-serif;transform:scaleX(1.0432);transform-origin:0 0;">Data Dictionary</div>
<svg class="a" style="left:357px;top:230px;" width="9" height="9" viewBox="0 0 9 9"><defs><linearGradient id="tbg" x1="0" y1="0" x2="0" y2="1"><stop offset="0" stop-color="#fff"/><stop offset="1" stop-color="#d0ccc4"/></linearGradient></defs><rect x="0.5" y="0.5" width="8" height="8" rx="1" fill="url(#tbg)" stroke="#8a8a8a"/><path d="M2 4.5h5" stroke="#000" stroke-width="1.2"/><path d="M4.5 2v5" stroke="#000" stroke-width="1.2"/></svg>
<div class="a" style="left:367px;top:234px;width:8px;height:1px;background:repeating-linear-gradient(90deg,#8a8a8a 0 1px,transparent 1px 2px)"></div>
<svg class="a" style="left:376px;top:227px;" width="16" height="14" viewBox="0 0 16 14"><defs><linearGradient id="fg" x1="0" y1="0" x2="0" y2="1"><stop offset="0" stop-color="#f4f0b8"/><stop offset="1" stop-color="#c8c070"/></linearGradient></defs>
<path d="M0.5 1.5 Q0.5 0.5 1.5 0.5 L5.5 0.5 L7 2.5 L14 2.5 Q14.5 2.5 14.5 3.5 L14.5 12 Q14.5 12.5 14 12.5 L1 12.5 Q0.5 12.5 0.5 12Z" fill="url(#fg)" stroke="#8a7a30"/>
<path d="M1 3.5 h13" stroke="#fffbd8" stroke-width="1"/></svg>
<svg class="a" style="left:393px;top:229px;" width="13" height="11" viewBox="0 0 13 11"><path d="M1 6 L4.5 9.5 L11.5 1.5" fill="none" stroke="#0a5a0a" stroke-width="3.6" stroke-linecap="round" stroke-linejoin="round"/>
<path d="M1 6 L4.5 9.5 L11.5 1.5" fill="none" stroke="#3ad03a" stroke-width="2" stroke-linecap="round" stroke-linejoin="round"/></svg>
<div class="t" style="left:412.00px;top:229px;font-size:11.5px;font-weight:normal;font-style:normal;color:#000;font-family:'Liberation Sans',sans-serif;transform:scaleX(1.0241);transform-origin:0 0;">Application Schemas</div>
<div class="a" style="left:361px;top:209px;width:1px;height:4px;background:repeating-linear-gradient(180deg,#8a8a8a 0 1px,transparent 1px 2px)"></div>
<div class="a" style="left:361px;top:226px;width:1px;height:4px;background:repeating-linear-gradient(180deg,#8a8a8a 0 1px,transparent 1px 2px)"></div>
<div class="t" style="left:346.00px;top:723px;font-size:12px;font-weight:normal;font-style:normal;color:#000;font-family:'Liberation Mono',monospace;transform:scaleX(0.9722);transform-origin:0 0;white-space:pre;">14.08:18:48:125;S008;I;20021 Thread 8 finished scanning, elapsed  00:00:28.049.</div>
<div class="t" style="left:346.00px;top:737px;font-size:12px;font-weight:normal;font-style:normal;color:#000;font-family:'Liberation Mono',monospace;transform:scaleX(0.9722);transform-origin:0 0;white-space:pre;">14.08:18:48:133;S016;I;20021 Thread 16 finished scanning, elapsed  00:00:28.047.</div>
<div class="t" style="left:346.00px;top:751px;font-size:12px;font-weight:normal;font-style:normal;color:#000;font-family:'Liberation Mono',monospace;transform:scaleX(0.9722);transform-origin:0 0;white-space:pre;">14.08:18:48:140;S017;I;20021 Thread 17 finished scanning, elapsed  00:00:28.043.</div>
<div class="t" style="left:346.00px;top:765px;font-size:12px;font-weight:normal;font-style:normal;color:#000;font-family:'Liberation Mono',monospace;transform:scaleX(0.9722);transform-origin:0 0;white-space:pre;">14.08:18:48:147;S023;I;20021 Thread 23 finished scanning, elapsed  00:00:28.041.</div>
<div class="t" style="left:346.00px;top:779px;font-size:12px;font-weight:normal;font-style:normal;color:#000;font-family:'Liberation Mono',monospace;transform:scaleX(0.9722);transform-origin:0 0;white-space:pre;">14.08:18:48:164;S009;I;20021 Thread 9 finished scanning, elapsed  00:00:28.086.</div>
<div class="t" style="left:346.00px;top:793px;font-size:12px;font-weight:normal;font-style:normal;color:#000;font-family:'Liberation Mono',monospace;transform:scaleX(0.9722);transform-origin:0 0;white-space:pre;">14.08:18:48:236;S007;I;20021 Thread 7 finished scanning, elapsed  00:00:28.161.</div>
<div class="t" style="left:346.00px;top:807px;font-size:12px;font-weight:normal;font-style:normal;color:#000;font-family:'Liberation Mono',monospace;transform:scaleX(0.9722);transform-origin:0 0;white-space:pre;">14.08:18:48:295;S032;I;20021 Thread 32 finished scanning, elapsed  00:00:28.184.</div>
<div class="t" style="left:346.00px;top:821px;font-size:12px;font-weight:normal;font-style:normal;color:#000;font-family:'Liberation Mono',monospace;transform:scaleX(0.9722);transform-origin:0 0;white-space:pre;">14.08:18:48:362;S026;I;20021 Thread 26 finished scanning, elapsed  00:00:28.255.</div>
<div class="t" style="left:346.00px;top:835px;font-size:12px;font-weight:normal;font-style:normal;color:#000;font-family:'Liberation Mono',monospace;transform:scaleX(0.9722);transform-origin:0 0;white-space:pre;">14.08:18:48:388;S014;I;20021 Thread 14 finished scanning, elapsed  00:00:28.291.</div>
<div class="t" style="left:346.00px;top:849px;font-size:12px;font-weight:normal;font-style:normal;color:#000;font-family:'Liberation Mono',monospace;transform:scaleX(0.9722);transform-origin:0 0;white-space:pre;">14.08:18:48:396;SMPE;I;20002 The full database scan finished. The total size is 3.88 GB. The scan elapsed 00:00:41.902.</div>
<div class="t" style="left:346.00px;top:877px;font-size:12px;font-weight:normal;font-style:normal;color:#000;font-family:'Liberation Mono',monospace;transform:scaleX(0.9722);transform-origin:0 0;white-space:pre;">14.08:18:50:202;Q016;I;20011 Initializing the scan report cache starts.</div>
<div class="t" style="left:346.00px;top:891px;font-size:12px;font-weight:normal;font-style:normal;color:#000;font-family:'Liberation Mono',monospace;transform:scaleX(0.9722);transform-origin:0 0;white-space:pre;">14.08:18:55:664;Q016;I;20012 Initializing the scan report cache elapsed 00:00:05.461.</div>
<div class="t" style="left:346.00px;top:905px;font-size:12px;font-weight:normal;font-style:normal;color:#000;font-family:'Liberation Mono',monospace;transform:scaleX(0.9722);transform-origin:0 0;white-space:pre;">14.08:18:55:664;Q016;I;20011 Initializing the scan report cache starts.</div>
<div class="t" style="left:346.00px;top:919px;font-size:12px;font-weight:normal;font-style:normal;color:#000;font-family:'Liberation Mono',monospace;transform:scaleX(0.9722);transform-origin:0 0;white-space:pre;">14.08:18:58:598;Q016;I;20012 Initializing the scan report cache elapsed 00:00:02.934.</div>
<div class="a" style="left:1655px;top:721px;width:14px;height:224px;background:linear-gradient(90deg,#e4e4e4,#f8f8f8)"></div>
<svg class="a" style="left:1657px;top:722px;" width="10" height="7" viewBox="0 0 10 7"><path d="M1 6 L5 2 L9 6" fill="none" stroke="#9a9a9a" stroke-width="1.6"/></svg>
<svg class="a" style="left:1657px;top:934px;" width="10" height="7" viewBox="0 0 10 7"><path d="M1 1 L5 5 L9 1" fill="none" stroke="#9a9a9a" stroke-width="1.6"/></svg>
<div class="a" style="left:1655px;top:918px;width:14px;height:14px;background:linear-gradient(90deg,#fff,#a8c4e8);border:1px solid #90b0e0;border-radius:2px"></div>
<div class="a" style="left:1661px;top:922px;width:4px;height:4px;background:#7ab0f8;border-radius:2px"></div>
<div class="t" style="left:1632.00px;top:953px;font-size:11.5px;font-weight:normal;font-style:normal;color:#fff;font-family:'Liberation Sans',sans-serif;transform:scaleX(1.0230);transform-origin:0 0;">Editing</div>
<svg class="a" style="left:1662px;top:959px;" width="10" height="9" viewBox="0 0 10 9"><defs><clipPath id="gc"><path d="M0 9 L9.5 0 L9.5 9Z"/></clipPath></defs><g clip-path="url(#gc)"><rect width="10" height="9" fill="#a8a48c"/><path d="M-1 10 L10 -1 M2 10 L11 1 M5 10 L12 3 M8 10 L13 5" stroke="#f4f4f0" stroke-width="1"/></g></svg>
</body></html>
